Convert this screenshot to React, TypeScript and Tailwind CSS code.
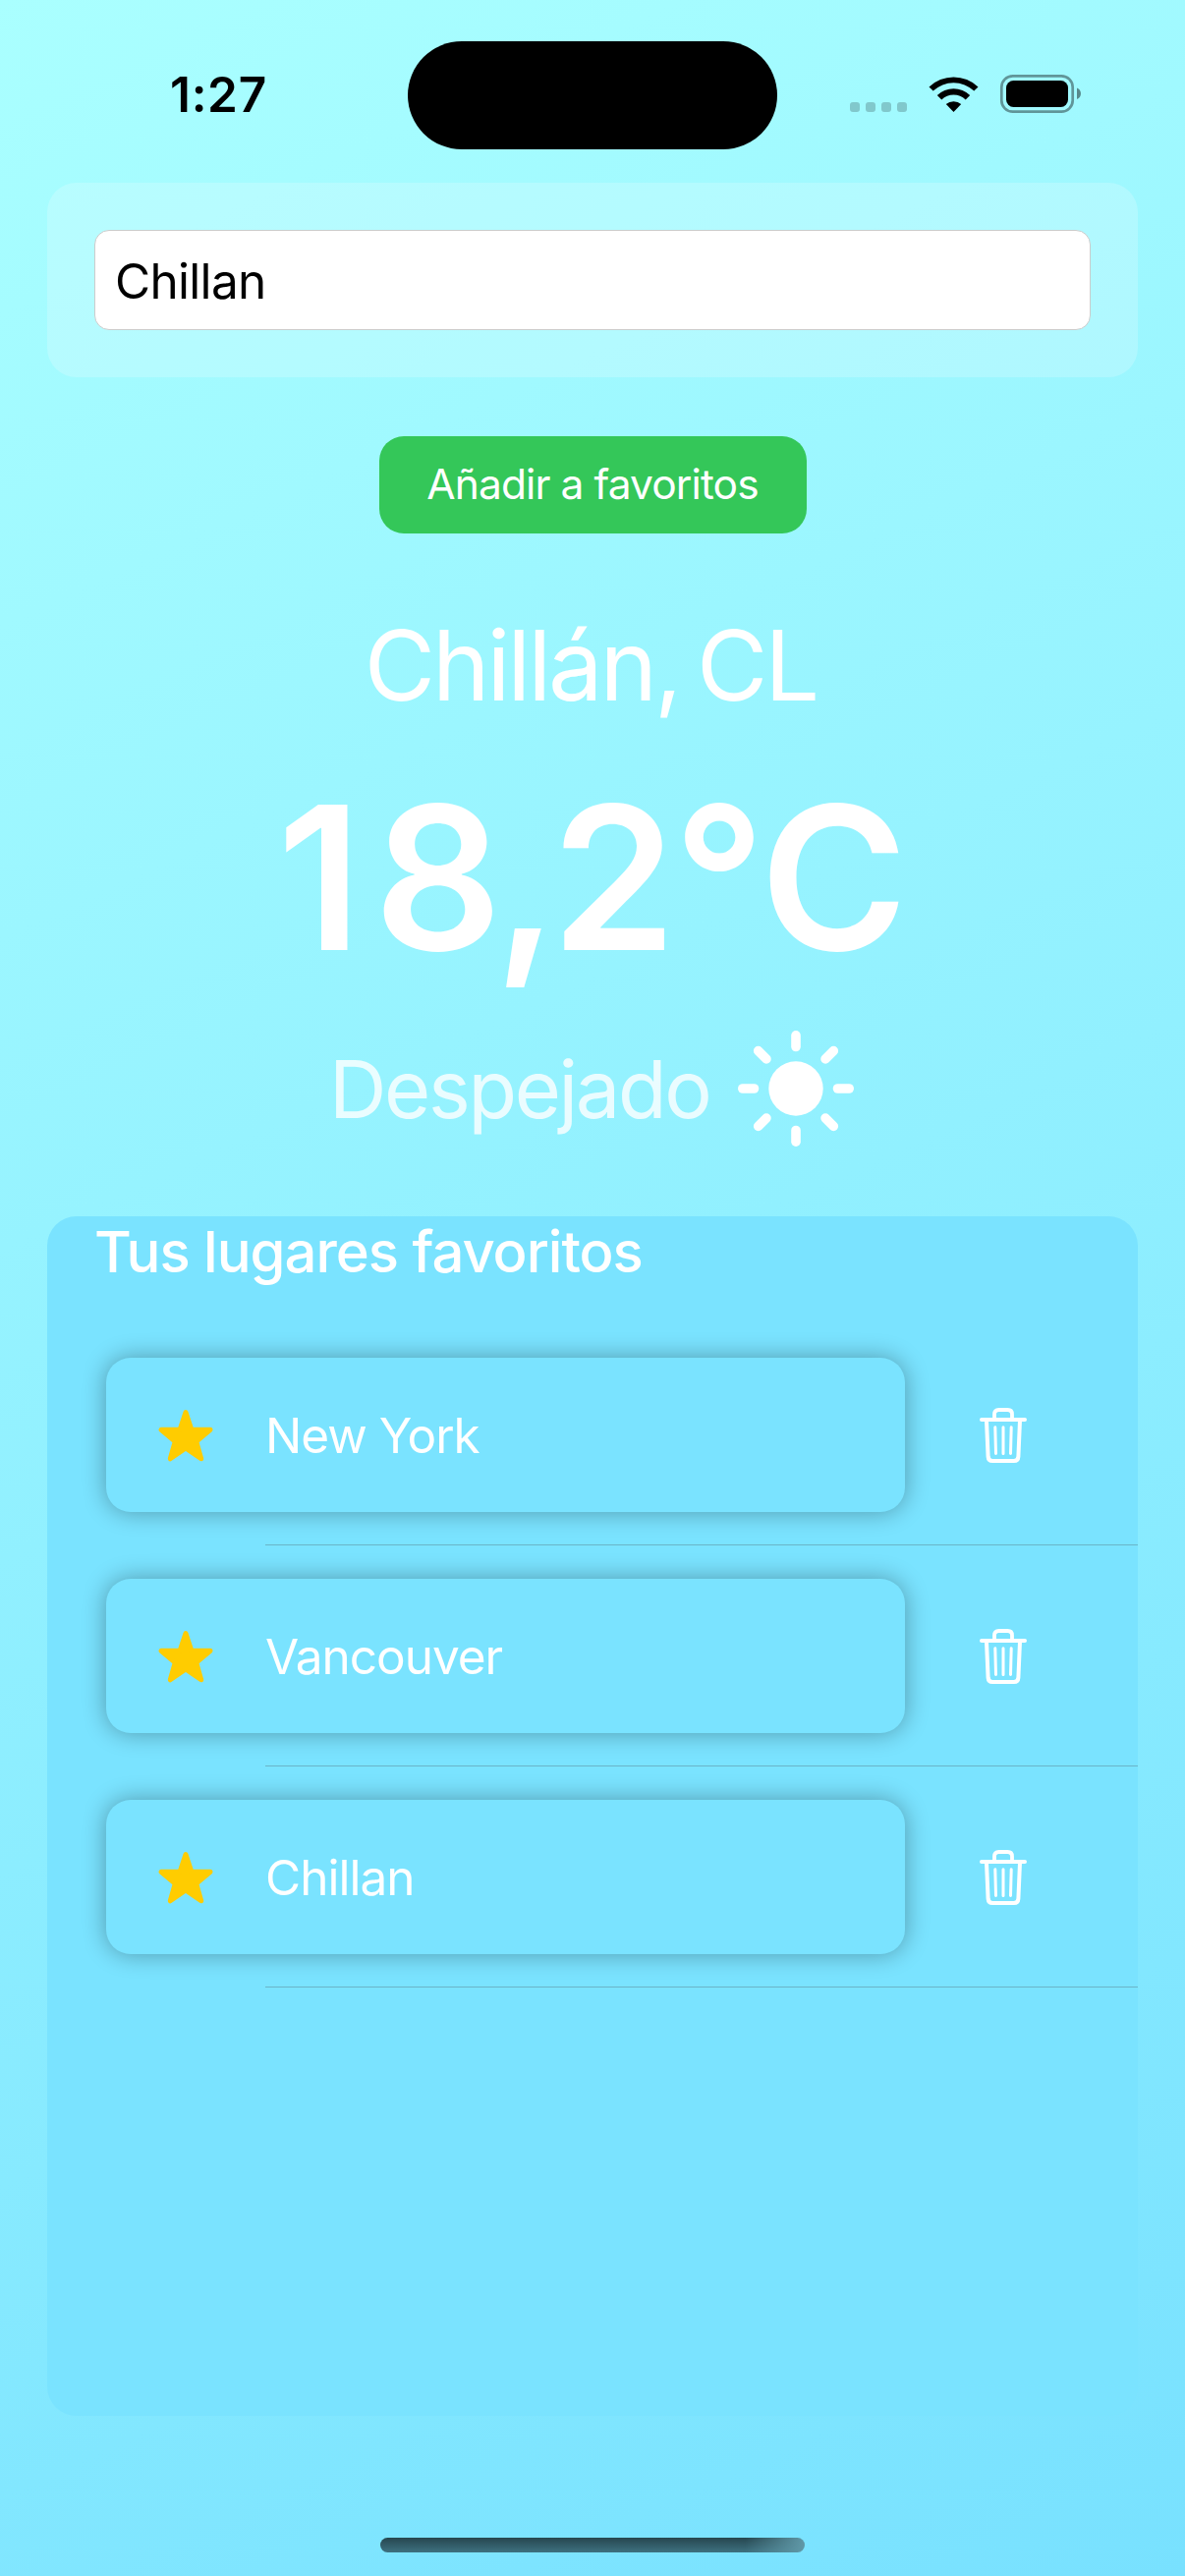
import React from "react";

const favorites = ["New York", "Vancouver", "Chillan"];

function StatusBar() {
  return (
    <header className="flex h-[186px] shrink-0 items-start pt-[42px]">
      <div className="flex h-[110px] w-[415px] items-center pl-[173px]">
        <span className="text-[49.5px] leading-none font-semibold tracking-[0.7px] text-black">1:27</span>
      </div>
      <div className="h-[110px] w-[376px] rounded-[55px] bg-black" />
      <div className="flex h-[110px] items-center">
        <svg width="415" height="110" viewBox="791 42 415 110">
          <g fill="#000" fillOpacity="0.2">
            <rect x="865" y="104" width="10" height="10" rx="3" />
            <rect x="881" y="104" width="10" height="10" rx="3" />
            <rect x="897" y="104" width="10" height="10" rx="3" />
            <rect x="913" y="104" width="10" height="10" rx="3" />
          </g>
          <path d="M945.5 88.5 A36 36 0 0 1 995.500 88.500 L991.300 92.600 A30 30 0 0 0 949.700 92.600 Z" fill="#000" />
          <path d="M953.800 97 A24 24 0 0 1 987.200 97 L982.700 101.500 A17.500 17.500 0 0 0 958.300 101.500 Z" fill="#000" />
          <path d="M962.800 106 A12 12 0 0 1 978.200 106 L970.500 114 Z" fill="#000" />
          <rect x="1019.300" y="77.300" width="72.400" height="36.400" rx="11.500" fill="none" stroke="#000" strokeOpacity="0.4" strokeWidth="2.700" />
          <rect x="1024" y="82" width="63" height="27" rx="7.500" fill="#000" />
          <path d="M1096 89.500 C1101.300 91.500 1101.300 99 1096 101 Z" fill="#000" fillOpacity="0.45" />
        </svg>
      </div>
    </header>
  );
}

function SunIcon() {
  return (
    <svg width="118" height="118" viewBox="-59 -59 118 118" fill="#fff">
      <circle r="27.700" />
      {[0, 45, 90, 135, 180, 225, 270, 315].map((angle) => (
        <rect key={angle} x="-4.800" y="-59" width="9.600" height="21.300" rx="4.800" transform={`rotate(${angle})`} />
      ))}
    </svg>
  );
}

function StarIcon() {
  return (
    <svg width="58" height="56" viewBox="0 0 58 56">
      <path
        d="M29 4.500 L34.900 22.300 L54 22.300 L39.700 34.300 L44.700 51.800 L29 41 L13.300 51.800 L18.300 34.300 L4 22.300 L23.100 22.300 Z"
        fill="#ffcc00"
        stroke="#ffcc00"
        strokeWidth="5"
        strokeLinejoin="round"
      />
    </svg>
  );
}

function TrashIcon() {
  return (
    <svg width="48" height="56" viewBox="0 0 48 56" fill="none" stroke="#fff" strokeLinecap="round" strokeLinejoin="round">
      <path d="M2 12 H46" strokeWidth="4" />
      <path d="M15 11 V6.500 Q15 2 19.500 2 H28.500 Q33 2 33 6.500 V11" strokeWidth="3.800" />
      <path d="M7 13 L8.600 49.500 Q8.900 54 13 54 H35 Q39.100 54 39.400 49.500 L41 13" strokeWidth="4" />
      <path d="M15.800 19.700 L16.500 46.500 M24 19.700 V46.500 M32.200 19.700 L31.500 46.500" strokeWidth="3" />
    </svg>
  );
}

function FavoriteRow({ name }: { name: string }) {
  return (
    <li className="flex h-[225px] flex-col">
      <div className="flex h-[191px] items-end">
        <div className="ml-[60px] flex h-[157px] w-[813px] items-center rounded-[25px] bg-[#7ae3ff] shadow-[0_0_25px_rgba(0,0,0,0.33)]">
          <span className="mt-px ml-[52px] flex w-[58px]"><StarIcon /></span>
          <span className="mt-0.5 ml-[52px] text-[49.5px] leading-none tracking-[-1px] text-white">{name}</span>
        </div>
        <button className="mb-[50px] ml-[76px] flex" aria-label="Eliminar"><TrashIcon /></button>
      </div>
      <div className="mt-[33px] ml-[222px] h-px bg-[#6ab4c8]" />
    </li>
  );
}

export default function App() {
  return (
    <div className="flex h-[2622px] w-[1206px] flex-col overflow-hidden bg-[linear-gradient(155.3deg,#aaffff,#78e1ff)] font-['Inter',sans-serif]">
      <StatusBar />
      <section className="mx-12 h-[198px] shrink-0 rounded-[30px] bg-white/20 p-12">
        <div className="flex h-[102px] items-center rounded-[15px] border border-[#cccccc] bg-white pt-[3px] pl-5">
          <span className="text-[49.5px] leading-none tracking-[-0.7px] text-black">Chillan</span>
        </div>
      </section>
      <button className="mt-[60px] flex h-[99px] w-[435px] shrink-0 items-center justify-center self-center rounded-[25px] bg-[#34c759] text-[42.5px] leading-none tracking-[-0.9px] text-white">
        Añadir a favoritos
      </button>
      <h1 className="mt-[74px] flex h-[120px] shrink-0 items-center justify-center pr-1 text-[99px] leading-none tracking-[-3.1px] text-white [word-spacing:-7px]">Chillán, CL</h1>
      <p className="mt-9 h-[240px] shrink-0 text-center text-[204px] leading-[240px] font-semibold text-white">
        <span className="tracking-[12px]">1</span>
        <span className="tracking-[-8px]">8</span>
        <span className="tracking-[-7px]">,</span>
        <span className="tracking-[-3px]">2</span>
        <span className="tracking-[-5px]">°</span>
        <span>C</span>
      </p>
      <div className="mt-[35px] flex h-[120px] shrink-0 items-center pl-[335px]">
        <span className="mt-0.5 w-[416px] text-[81px] leading-none tracking-[-2.35px] whitespace-nowrap text-white/80">Despejado</span>
        <SunIcon />
      </div>
      <section className="mx-12 mt-[70px] h-[1221px] shrink-0 overflow-hidden rounded-[30px] bg-[#7ae3ff]">
        <h2 className="flex h-[72px] items-center pl-12 text-[58px] leading-none font-medium tracking-[-1.02px] text-white">Tus lugares favoritos</h2>
        <ul className="mt-[38px]">
          {favorites.map((name) => (
            <FavoriteRow key={name} name={name} />
          ))}
        </ul>
      </section>
      <div className="mx-auto mt-[124px] h-[15px] w-[432px] shrink-0 rounded-full bg-[linear-gradient(90deg,transparent_86%,#6099a8),linear-gradient(180deg,#26464f,#3e7180)]" />
    </div>
  );
}
